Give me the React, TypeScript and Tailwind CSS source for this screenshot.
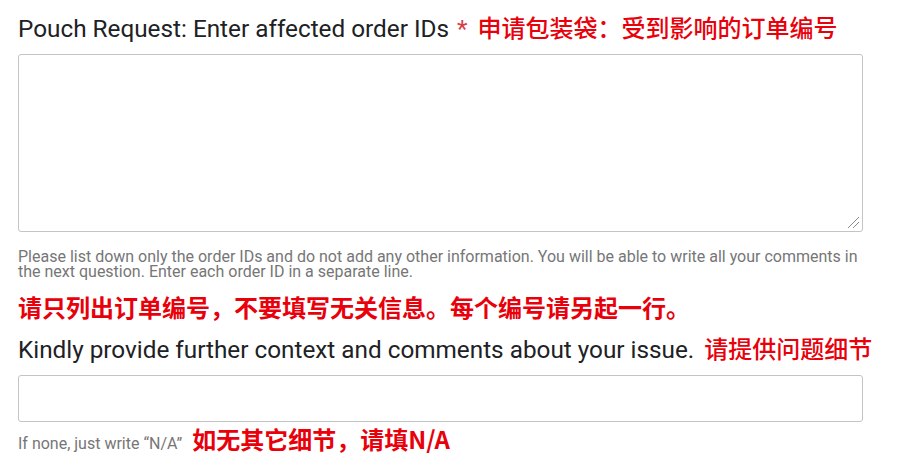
import React from "react";

export default function App() {
  return (
    <div className="w-[898px] h-[475px] bg-white overflow-hidden pl-[18px] pr-[36px] pt-[12px] font-['Roboto','Noto_Sans_CJK_SC',sans-serif]">
      <div className="flex items-baseline h-[30px] text-[24.3px] leading-[30px] text-[#202124] whitespace-nowrap">
        <span>Pouch Request: Enter affected order IDs</span>
        <span className="ml-[8px] text-[#db3a4a]">*</span>
        <span className="ml-[10px] text-[24px] font-medium text-[#e8000b] font-['Noto_Sans_CJK_SC',sans-serif]">申请包装袋：受到影响的订单编号</span>
      </div>
      <div className="relative mt-[12px] h-[178px] w-[845px] rounded-[3px] border border-[#c4c4c4] bg-white">
        <svg className="absolute right-[2px] bottom-[2px]" width="14" height="14" viewBox="0 0 14 14">
          <line x1="13" y1="2" x2="2" y2="13" stroke="#8a8a8a" strokeWidth="1" />
          <line x1="13" y1="7" x2="7" y2="13" stroke="#8a8a8a" strokeWidth="1" />
        </svg>
      </div>
      <p className="mt-[17px] w-[845px] text-[16px] leading-[15px] text-[#767676]">
        Please list down only the order IDs and do not add any other information. You will be able to write all your comments in the next question. Enter each order ID in a separate line.
      </p>
      <div className="mt-[13px] h-[30px] leading-[30px] text-[24px] font-bold text-[#e8000b] whitespace-nowrap font-['Noto_Sans_CJK_SC',sans-serif]">
        请只列出订单编号，不要填写无关信息。每个编号请另起一行。
      </div>
      <div className="mt-[11px] flex items-baseline h-[30px] leading-[30px] text-[24.3px] text-[#202124] whitespace-nowrap">
        <span>Kindly provide further context and comments about your issue.</span>
        <span className="ml-[10px] text-[24px] font-medium text-[#e8000b] font-['Noto_Sans_CJK_SC',sans-serif]">请提供问题细节</span>
      </div>
      <div className="mt-[12px] h-[47px] w-[845px] rounded-[3px] border border-[#c4c4c4] bg-white" />
      <div className="mt-[2px] flex items-baseline h-[30px] leading-[30px] whitespace-nowrap">
        <span className="text-[16px] text-[#767676]">If none, just write “N/A”</span>
        <span className="ml-[10px] text-[24px] font-bold text-[#e8000b] font-['Noto_Sans_CJK_SC',sans-serif]">如无其它细节，请填N/A</span>
      </div>
    </div>
  );
}
